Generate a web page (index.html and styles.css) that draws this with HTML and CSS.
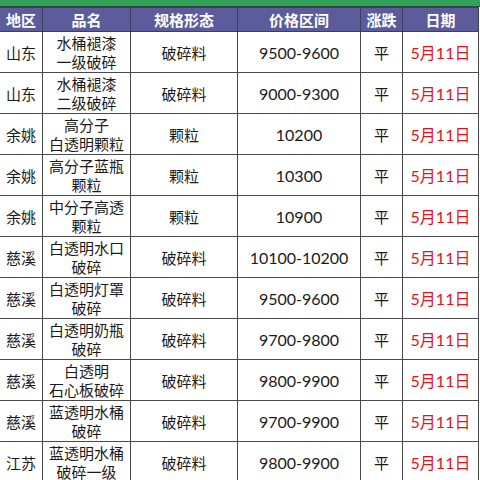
FILE: index.html
```html
<!DOCTYPE html>
<html lang="zh">
<head>
<meta charset="utf-8">
<link rel="stylesheet" href="styles.css">
</head>
<body>
<div class="topbar"></div>
<table class="price">
  <colgroup>
    <col class="c1"><col class="c2"><col class="c3"><col class="c4"><col class="c5"><col class="c6">
  </colgroup>
  <thead>
    <tr><th>地区</th><th>品名</th><th>规格形态</th><th>价格区间</th><th>涨跌</th><th>日期</th></tr>
  </thead>
  <tbody>
    <tr><td>山东</td><td>水桶褪漆<br>一级破碎</td><td>破碎料</td><td class="num">9500-9600</td><td>平</td><td class="date">5月11日</td></tr>
    <tr><td>山东</td><td>水桶褪漆<br>二级破碎</td><td>破碎料</td><td class="num">9000-9300</td><td>平</td><td class="date">5月11日</td></tr>
    <tr><td>余姚</td><td>高分子<br>白透明颗粒</td><td>颗粒</td><td class="num">10200</td><td>平</td><td class="date">5月11日</td></tr>
    <tr><td>余姚</td><td>高分子蓝瓶<br>颗粒</td><td>颗粒</td><td class="num">10300</td><td>平</td><td class="date">5月11日</td></tr>
    <tr><td>余姚</td><td>中分子高透<br>颗粒</td><td>颗粒</td><td class="num">10900</td><td>平</td><td class="date">5月11日</td></tr>
    <tr><td>慈溪</td><td>白透明水口<br>破碎</td><td>破碎料</td><td class="num">10100-10200</td><td>平</td><td class="date">5月11日</td></tr>
    <tr><td>慈溪</td><td>白透明灯罩<br>破碎</td><td>破碎料</td><td class="num">9500-9600</td><td>平</td><td class="date">5月11日</td></tr>
    <tr><td>慈溪</td><td>白透明奶瓶<br>破碎</td><td>破碎料</td><td class="num">9700-9800</td><td>平</td><td class="date">5月11日</td></tr>
    <tr><td>慈溪</td><td>白透明<br>石心板破碎</td><td>破碎料</td><td class="num">9800-9900</td><td>平</td><td class="date">5月11日</td></tr>
    <tr><td>慈溪</td><td>蓝透明水桶<br>破碎</td><td>破碎料</td><td class="num">9700-9900</td><td>平</td><td class="date">5月11日</td></tr>
    <tr><td>江苏</td><td>蓝透明水桶<br>破碎一级</td><td>破碎料</td><td class="num">9800-9900</td><td>平</td><td class="date">5月11日</td></tr>
  </tbody>
</table>
</body>
</html>
```

FILE: styles.css
```css
html, body {
  margin: 0;
  padding: 0;
  background: #ffffff;
  width: 480px;
  height: 480px;
  overflow: hidden;
  font-family: "Noto Sans CJK SC", "Noto Sans", sans-serif;
}

.topbar {
  height: 6px;
  background: #35a05a;
  border-bottom: 1px solid #2c4a3a;
}

.price {
  width: 478px;
  table-layout: fixed;
  border-collapse: collapse;
  margin-left: -1px;
}

.c1 { width: 43px; }
.c2 { width: 88px; }
.c3 { width: 107px; }
.c4 { width: 123px; }
.c5 { width: 42px; }
.c6 { width: 76px; }

.price th {
  background: #5c5b9c;
  color: #ffffff;
  font-weight: 700;
  font-size: 15px;
  line-height: 17px;
  height: 23px;
  padding: 0;
  border: 1px solid #3e3e5e;
  text-align: center;
  vertical-align: middle;
}

.price td {
  height: 40px;
  padding: 0;
  border: 1px solid #4a4a4a;
  text-align: center;
  vertical-align: middle;
  color: #1a1a1a;
  font-size: 15px;
  line-height: 19px;
}

.price td.num {
  font-family: "Lato", "Liberation Sans", sans-serif;
  font-size: 16px;
}

.price td.date {
  color: #e8101c;
  font-family: "Lato", "Noto Sans CJK SC", sans-serif;
  font-size: 16px;
}
```
